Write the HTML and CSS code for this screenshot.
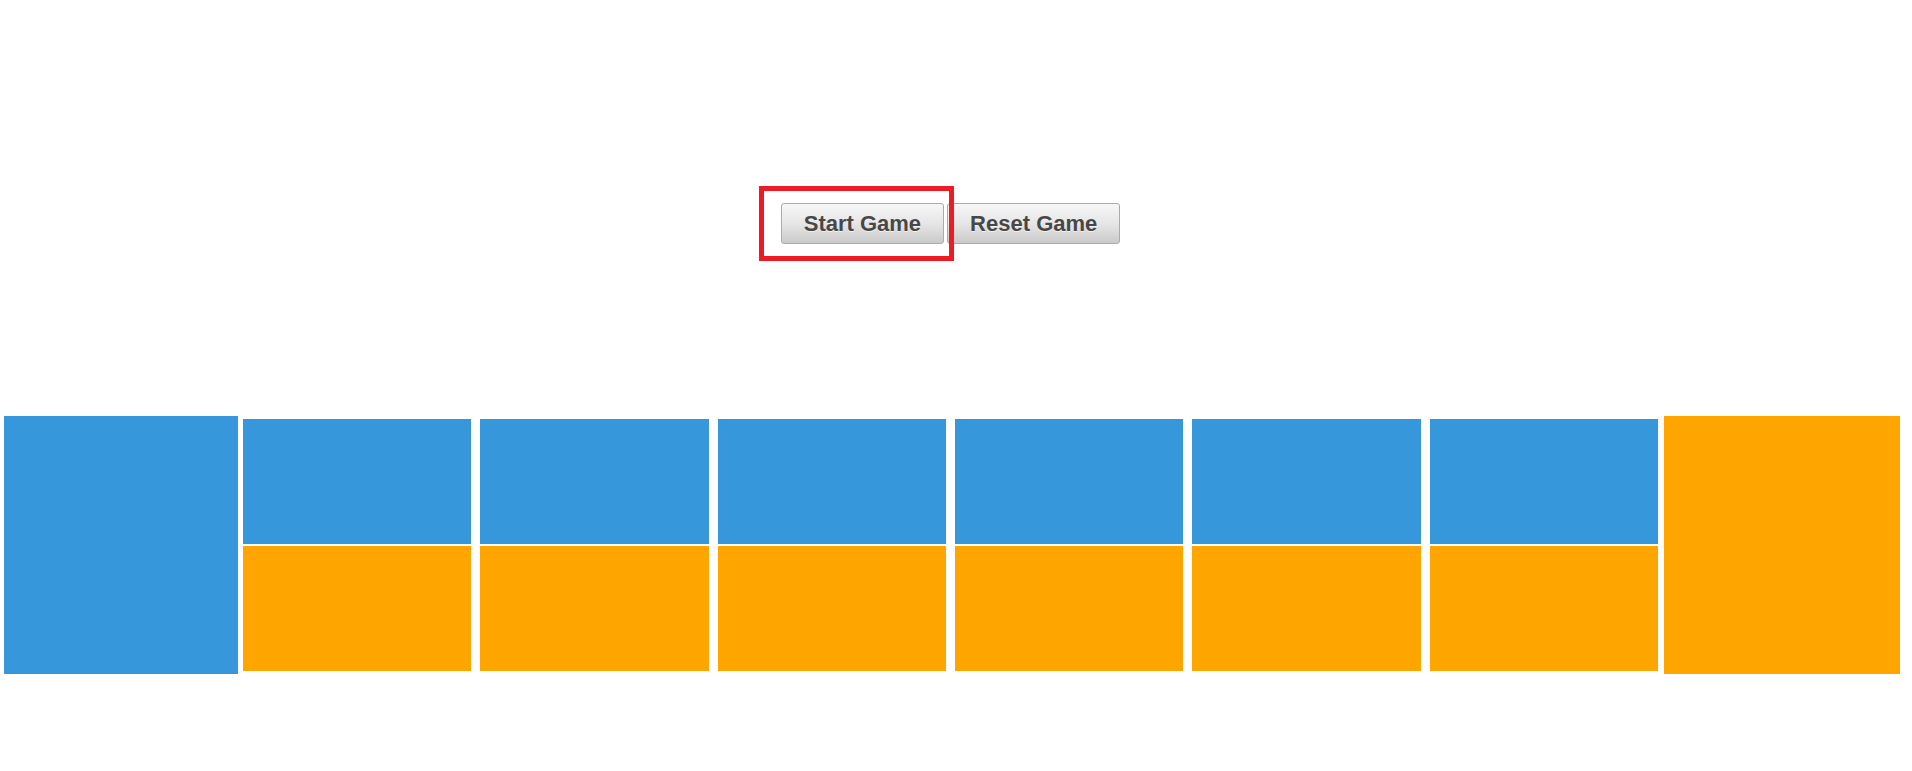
FILE: index.html
```html
<!DOCTYPE html>
<html>
<head>
<meta charset="utf-8">
<link rel="stylesheet" href="styles.css">
</head>
<body>
<div class="controls">
  <span class="highlight"><button class="btn">Start Game</button></span>
  <button class="btn">Reset Game</button>
</div>
<div class="board">
  <div class="store store-blue"></div>
  <div class="pits">
    <div class="pit blue"></div>
    <div class="pit blue"></div>
    <div class="pit blue"></div>
    <div class="pit blue"></div>
    <div class="pit blue"></div>
    <div class="pit blue"></div>
    <div class="pit orange"></div>
    <div class="pit orange"></div>
    <div class="pit orange"></div>
    <div class="pit orange"></div>
    <div class="pit orange"></div>
    <div class="pit orange"></div>
  </div>
  <div class="store store-orange"></div>
</div>
</body>
</html>
```
FILE: styles.css
```css
html, body {
  margin: 0;
  padding: 0;
  background: #fff;
  font-family: "Liberation Sans", Arial, sans-serif;
}

.controls {
  display: flex;
  justify-content: center;
  align-items: center;
  gap: 3px;
  padding-top: 203px;
  padding-right: 11px;
  height: 41px;
}

.highlight {
  position: relative;
  display: inline-flex;
}

.highlight::after {
  content: "";
  position: absolute;
  left: -22px;
  top: -17px;
  right: -10px;
  bottom: -17px;
  border: 5px solid #ed1c24;
  pointer-events: none;
}

.btn {
  box-sizing: border-box;
  height: 41px;
  padding: 0 22px;
  margin: 0;
  border: 1px solid #ababab;
  border-radius: 3px;
  background: linear-gradient(to bottom, #f7f7f7 0%, #e6e6e6 50%, #cacaca 100%);
  color: #474747;
  font-family: "Liberation Sans", Arial, sans-serif;
  font-weight: bold;
  font-size: 22px;
  line-height: 25px;
  text-shadow: 0 1px 0 rgba(255, 255, 255, 0.6);
  cursor: pointer;
}

.board {
  display: flex;
  align-items: center;
  margin-top: 172px;
  padding-left: 4px;
}

.store {
  height: 258px;
  flex: none;
}

.store-blue {
  width: 234px;
  background: #3698db;
  margin-right: 5px;
}

.store-orange {
  width: 236px;
  background: #ffa500;
  margin-left: 6px;
}

.pits {
  width: 1415px;
  display: grid;
  grid-template-columns: repeat(6, 1fr);
  grid-template-rows: 125px 125px;
  column-gap: 9px;
  row-gap: 2px;
}

.pit.blue {
  background: #3698db;
}

.pit.orange {
  background: #ffa500;
}
```
